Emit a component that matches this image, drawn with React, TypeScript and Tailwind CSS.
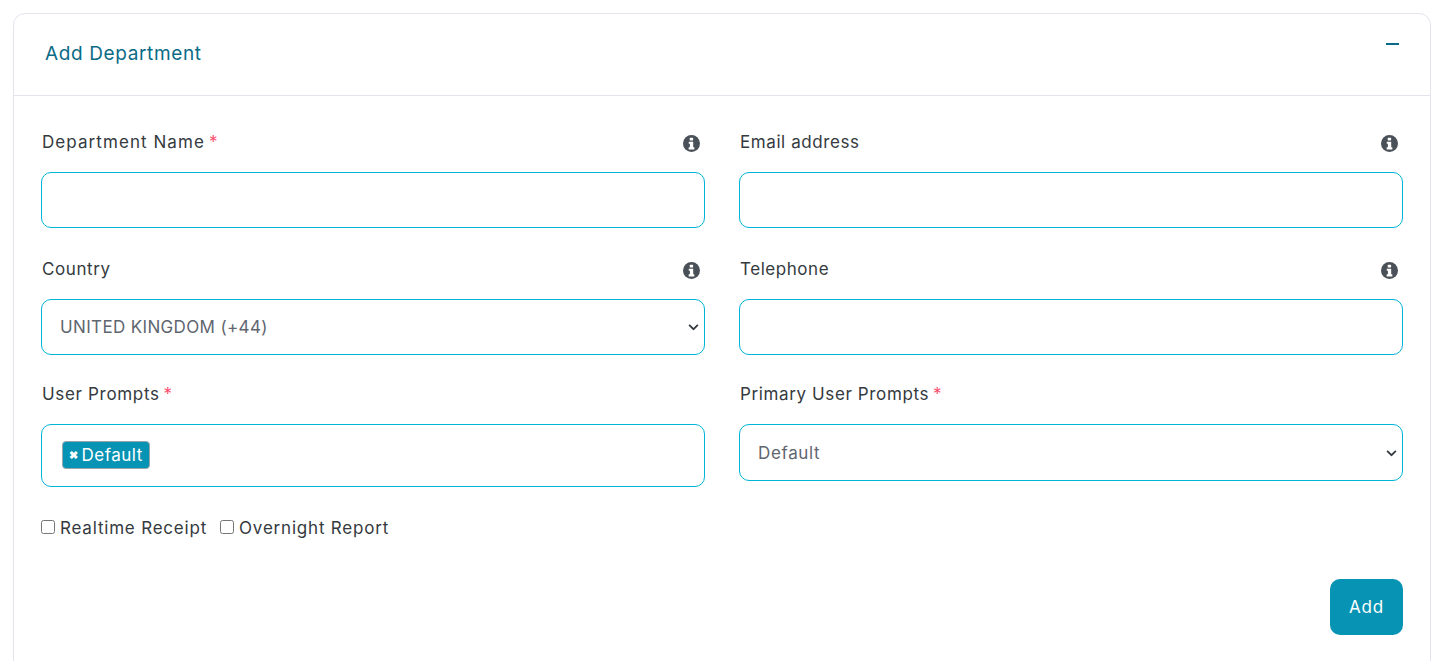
function InfoIcon() {
  return (
    <svg viewBox="0 0 18 18" className="mt-[5px] h-[17px] w-[17px] shrink-0">
      <circle cx="9" cy="9" r="9" fill="#495057" />
      <rect x="7.1" y="2.8" width="3.6" height="2.9" rx="0.5" fill="#fff" />
      <path d="M6.1 7.1h4.7v6h1.2v2.2H6v-2.2h1.3V9.3H6.1z" fill="#fff" />
    </svg>
  );
}

function Label({ text, required, info, tracking }: { text: string; required?: boolean; info?: boolean; tracking: string }) {
  return (
    <div className="flex h-[42px] items-start justify-between pl-px pr-[5px]">
      <span className={`text-[17px] leading-[24px] text-[#343a40] ${tracking}`}>
        {text}
        {required && <span className="ml-[4px] text-[#f9506f]">*</span>}
      </span>
      {info && <InfoIcon />}
    </div>
  );
}

const inputCls =
  "block w-full rounded-[10px] border border-[#00b4d8] bg-white px-[18px] text-[17px] text-[#5f6670] outline-none";

function Select({ value, tracking, height }: { value: string; tracking: string; height: string }) {
  return (
    <div className="relative">
      <select className={`${inputCls} appearance-none pt-[2px] ${height} ${tracking}`} defaultValue={value}>
        <option value={value}>{value}</option>
      </select>
      <svg
        viewBox="0 0 12 8"
        className="pointer-events-none absolute right-[6px] top-1/2 h-[7px] w-[11px] -translate-y-1/2"
        fill="none"
        stroke="#343a40"
        strokeWidth="2"
      >
        <path d="M1 1.5 6 6.5 11 1.5" />
      </svg>
    </div>
  );
}

export default function App() {
  return (
    <div className="h-[661px] overflow-hidden bg-white pl-[13px] pr-[15px] pt-[13px] font-['Inter','Liberation_Sans',sans-serif]">
      <div className="h-[700px] rounded-[12px] border border-[#e4e4ef] bg-white">
        <div className="flex h-[82px] items-start justify-between border-b border-[#e4e4ef] px-[31px]">
          <h2 className="mt-[27px] text-[19px] leading-[26px] tracking-[0.63px] text-[#0b6b87]">Add Department</h2>
          <span className="mt-[29px] h-[2px] w-[13px] bg-[#0b6b87]" />
        </div>
        <div className="px-[27px] pt-[34px]">
          <div className="grid grid-cols-2 gap-x-[34px]">
            <div>
              <Label text="Department Name" required info tracking="tracking-[1.07px]" />
              <input className={`${inputCls} h-[56px]`} />
            </div>
            <div>
              <Label text="Email address" info tracking="tracking-[0.58px]" />
              <input className={`${inputCls} h-[56px]`} />
            </div>
          </div>
          <div className="mt-[29px] grid grid-cols-2 gap-x-[34px]">
            <div>
              <Label text="Country" info tracking="tracking-[0.6px]" />
              <Select value="UNITED KINGDOM (+44)" tracking="tracking-[0.35px]" height="h-[56px]" />
            </div>
            <div>
              <Label text="Telephone" info tracking="tracking-[0.55px]" />
              <input className={`${inputCls} h-[56px]`} />
            </div>
          </div>
          <div className="mt-[27px] grid grid-cols-2 items-start gap-x-[34px]">
            <div>
              <Label text="User Prompts" required tracking="tracking-[0.67px]" />
              <div className="flex h-[63px] items-center rounded-[10px] border border-[#00b4d8] px-[20px]">
                <span className="mb-[2px] flex h-[28px] items-center gap-[3px] rounded-[4px] border border-[#9aa5ab] bg-[#0793b4] px-[6px] pt-[2px] text-[17px] tracking-[0.5px] text-white">
                  <span className="text-[11px] font-bold">✖</span>Default
                </span>
              </div>
            </div>
            <div>
              <Label text="Primary User Prompts" required tracking="tracking-[0.62px]" />
              <Select value="Default" tracking="tracking-[0.64px]" height="h-[57px]" />
            </div>
          </div>
          <div className="mt-[31px] flex items-center gap-[13px] text-[17px] leading-[20px] tracking-[0.8px] text-[#343a40]">
            <label className="flex items-center gap-[5px]">
              <input type="checkbox" className="mb-[2px] h-[14px] w-[14px]" />
              Realtime Receipt
            </label>
            <label className="flex items-center gap-[5px]">
              <input type="checkbox" className="mb-[2px] h-[14px] w-[14px]" />
              Overnight Report
            </label>
          </div>
          <div className="mt-[41px] flex justify-end">
            <button className="h-[56px] w-[73px] rounded-[10px] bg-[#0793b4] pt-[2px] text-[17px] tracking-[0.8px] text-white">Add</button>
          </div>
        </div>
      </div>
    </div>
  );
}
